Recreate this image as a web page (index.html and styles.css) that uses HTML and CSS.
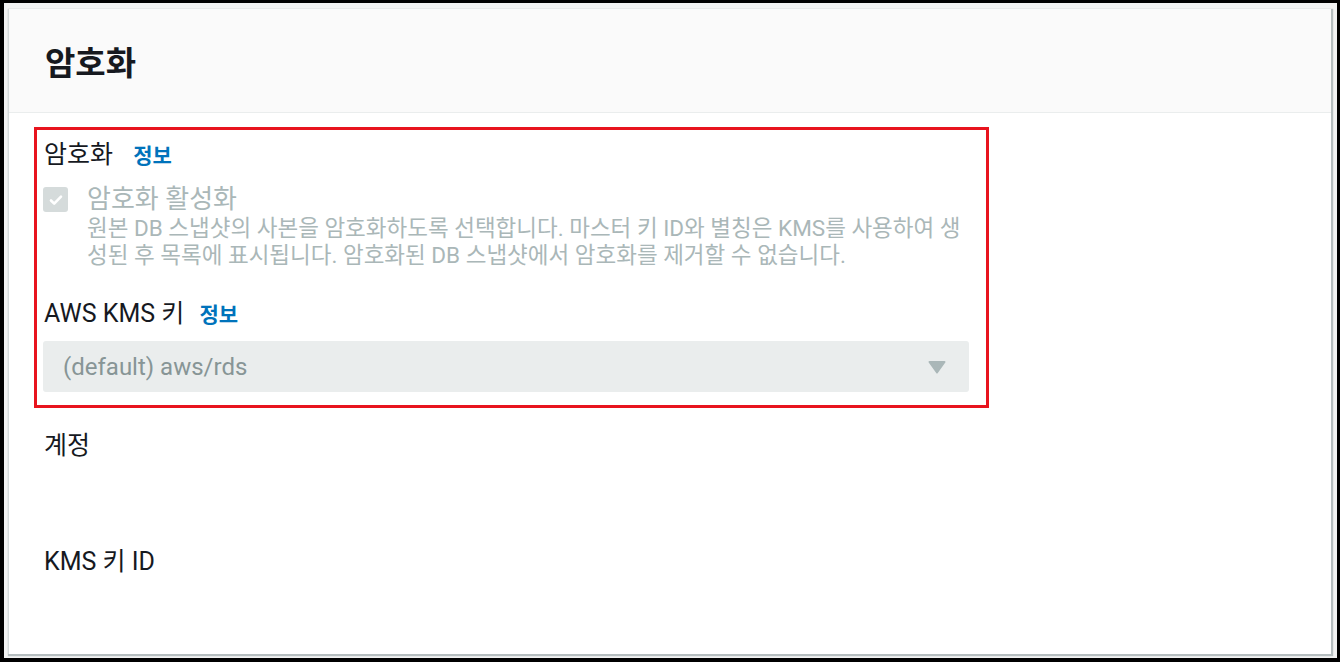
FILE: index.html
```html
<!DOCTYPE html>
<html lang="ko">
<head>
<meta charset="utf-8">
<title>암호화</title>
<link rel="stylesheet" href="styles.css">
</head>
<body>
<div class="page">
  <div class="card">
    <div class="card-header">
      <h2 class="title">암호화</h2>
    </div>
    <div class="card-body">
      <div class="highlight">
        <div class="label">암호화 <a class="info">정보</a></div>
        <div class="check-row">
          <span class="checkbox">
            <svg width="16" height="16" viewBox="0 0 16 16"><path d="M3 8.5l3.2 3.2L13 4.6" fill="none" stroke="#fff" stroke-width="2.6" stroke-linecap="round" stroke-linejoin="round"/></svg>
          </span>
          <div class="check-text">
            <div class="check-title">암호화 활성화</div>
            <div class="check-desc">원본 DB 스냅샷의 사본을 암호화하도록 선택합니다. 마스터 키 ID와 별칭은 KMS를 사용하여 생성된 후 목록에 표시됩니다. 암호화된 DB 스냅샷에서 암호화를 제거할 수 없습니다.</div>
          </div>
        </div>
        <div class="label kms-label">AWS KMS 키 <a class="info">정보</a></div>
        <div class="select">
          <span>(default) aws/rds</span>
          <svg class="arrow" width="18" height="14" viewBox="0 0 18 14"><path d="M1.5 1h15a1 1 0 0 1 .8 1.6l-7.5 10.4a1 1 0 0 1-1.6 0L.7 2.6A1 1 0 0 1 1.5 1z" fill="#aab7b8"/></svg>
        </div>
      </div>
      <div class="field">
        <div class="label">계정</div>
        <div class="value"></div>
      </div>
      <div class="field">
        <div class="label">KMS 키 ID</div>
        <div class="value"></div>
      </div>
    </div>
  </div>
</div>
</body>
</html>
```

FILE: styles.css
```css
html, body {
  margin: 0;
  height: 100%;
}

body {
  background: #000;
  padding: 3px 3px 4px 4px;
  box-sizing: border-box;
  font-family: Roboto, "Noto Sans CJK KR", sans-serif;
  color: #16191f;
}

.page {
  height: 100%;
  background: #f2f3f3;
  padding: 6px 6px 4px 4px;
  box-sizing: border-box;
}

.card {
  height: 100%;
  background: #fff;
  border-left: 1px solid #d5dbdb;
  box-shadow: 1px 1px 1px 1px rgba(0, 28, 36, 0.25);
}

.card-header {
  height: 103px;
  background: #fafafa;
  border-bottom: 1px solid #eaeded;
  padding-left: 36px;
  display: flex;
  align-items: center;
}

.title {
  margin: 0;
  font-size: 33px;
  font-weight: 700;
  padding-top: 1px;
}

.card-body {
  padding: 14px 0 0 25px;
}

.highlight {
  box-sizing: border-box;
  width: 955px;
  border: 3px solid #e8141e;
  padding: 9px 17px 13px 6px;
}

.label {
  font-size: 25px;
  line-height: 32px;
  padding-left: 1px;
}

.info {
  color: #0073bb;
  font-weight: 700;
  font-size: 21px;
  margin-left: 14px;
}

.kms-label .info {
  margin-left: 9px;
}

.check-row {
  display: flex;
  margin-top: 13px;
}

.checkbox {
  width: 25px;
  height: 25px;
  border-radius: 3px;
  background: #d5dbdb;
  flex: none;
  display: flex;
  align-items: center;
  justify-content: center;
  margin-top: 2px;
}

.check-text {
  margin-left: 19px;
  color: #aab7b8;
}

.check-title {
  font-size: 26px;
  line-height: 28px;
}

.check-desc {
  font-size: 22.5px;
  line-height: 27px;
  margin-top: 2px;
}

.kms-label {
  margin-top: 29px;
}

.select {
  margin-top: 10px;
  height: 51px;
  background: #eaeded;
  border-radius: 3px;
  display: flex;
  align-items: center;
  justify-content: space-between;
  padding: 0 23px 0 20px;
  font-size: 24px;
  color: #879596;
}

.field {
  padding-left: 9px;
  margin-top: 22px;
}

.field .value {
  height: 62px;
}
```
